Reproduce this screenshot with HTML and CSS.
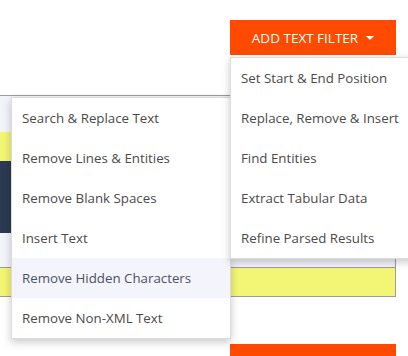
FILE: index.html
```html
<!DOCTYPE html>
<html lang="en">
<head>
    <meta charset="UTF-8">
    <title>Text filters</title>
    <link rel="stylesheet" href="styles.css">
</head>
<body>
<div class="page">
    <div class="toolbar">
        <button class="btn-filter">ADD TEXT FILTER <span class="caret"></span></button>
    </div>

    <div class="panel">
        <div class="row row-light row-head"></div>
        <div class="row row-yellow row-a"></div>
        <div class="row row-dark"></div>
        <div class="row row-light row-b"></div>
        <div class="row row-yellow row-c"></div>
    </div>

    <div class="toolbar toolbar-bottom">
        <div class="btn-filter btn-stub"></div>
    </div>

    <ul class="menu menu-main">
        <li>Set Start &amp; End Position</li>
        <li>Replace, Remove &amp; Insert</li>
        <li>Find Entities</li>
        <li>Extract Tabular Data</li>
        <li>Refine Parsed Results</li>
    </ul>

    <ul class="menu menu-sub">
        <li>Search &amp; Replace Text</li>
        <li>Remove Lines &amp; Entities</li>
        <li>Remove Blank Spaces</li>
        <li>Insert Text</li>
        <li class="active">Remove Hidden Characters</li>
        <li>Remove Non-XML Text</li>
    </ul>
</div>
</body>
</html>
```

FILE: styles.css
```css
* {
    margin: 0;
    padding: 0;
    box-sizing: border-box;
}

html, body {
    width: 408px;
    height: 356px;
    overflow: hidden;
    background: #fff;
}

body {
    font-family: "Segoe UI", "Open Sans", sans-serif;
    font-size: 13.3px;
    color: #4a4a4a;
}

ul {
    list-style: none;
}

.page {
    position: relative;
    width: 408px;
    height: 356px;
}

.toolbar {
    padding: 20px 0 0 230px;
}

.btn-filter {
    display: flex;
    align-items: center;
    justify-content: center;
    gap: 8px;
    width: 166px;
    height: 35px;
    border: 0;
    background-color: #ff4a00;
    color: #fff;
    font-family: inherit;
    font-size: 13.5px;
    cursor: pointer;
}

.caret {
    width: 0;
    height: 0;
    border-left: 4px solid transparent;
    border-right: 4px solid transparent;
    border-top: 4px solid #fff;
}

.toolbar-bottom {
    padding-top: 47px;
}

.btn-stub {
    height: 20px;
}

.panel {
    margin-top: 40px;
    margin-left: -2px;
    width: 398px;
    border-top: 1px solid #9c9c9c;
    border-right: 1px solid #9c9c9c;
    border-bottom: 1px solid #9c9c9c;
}

.row-light {
    background-color: #f3f4fa;
}

.row-yellow {
    background-color: #f3f574;
}

.row-dark {
    background-color: #2b3a52;
    height: 72px;
}

.row-head {
    height: 36px;
}

.row-a {
    height: 29px;
}

.row-b {
    height: 35px;
    border-bottom: 1px solid #9c9c9c;
}

.row-c {
    height: 28px;
}

.menu {
    position: absolute;
    background: #fff;
    border: 1px solid #dcdcdc;
    box-shadow: 0 3px 8px rgba(0, 0, 0, 0.22);
}

.menu li {
    height: 40px;
    line-height: 40px;
    padding-left: 10px;
    white-space: nowrap;
    cursor: pointer;
}

.menu li.active {
    background-color: #f4f5fc;
    color: #4b5262;
}

.menu-main {
    left: 230px;
    top: 57px;
    width: 190px;
    z-index: 2;
}

.menu-sub {
    left: 11px;
    top: 97px;
    width: 220px;
    z-index: 1;
}
```
